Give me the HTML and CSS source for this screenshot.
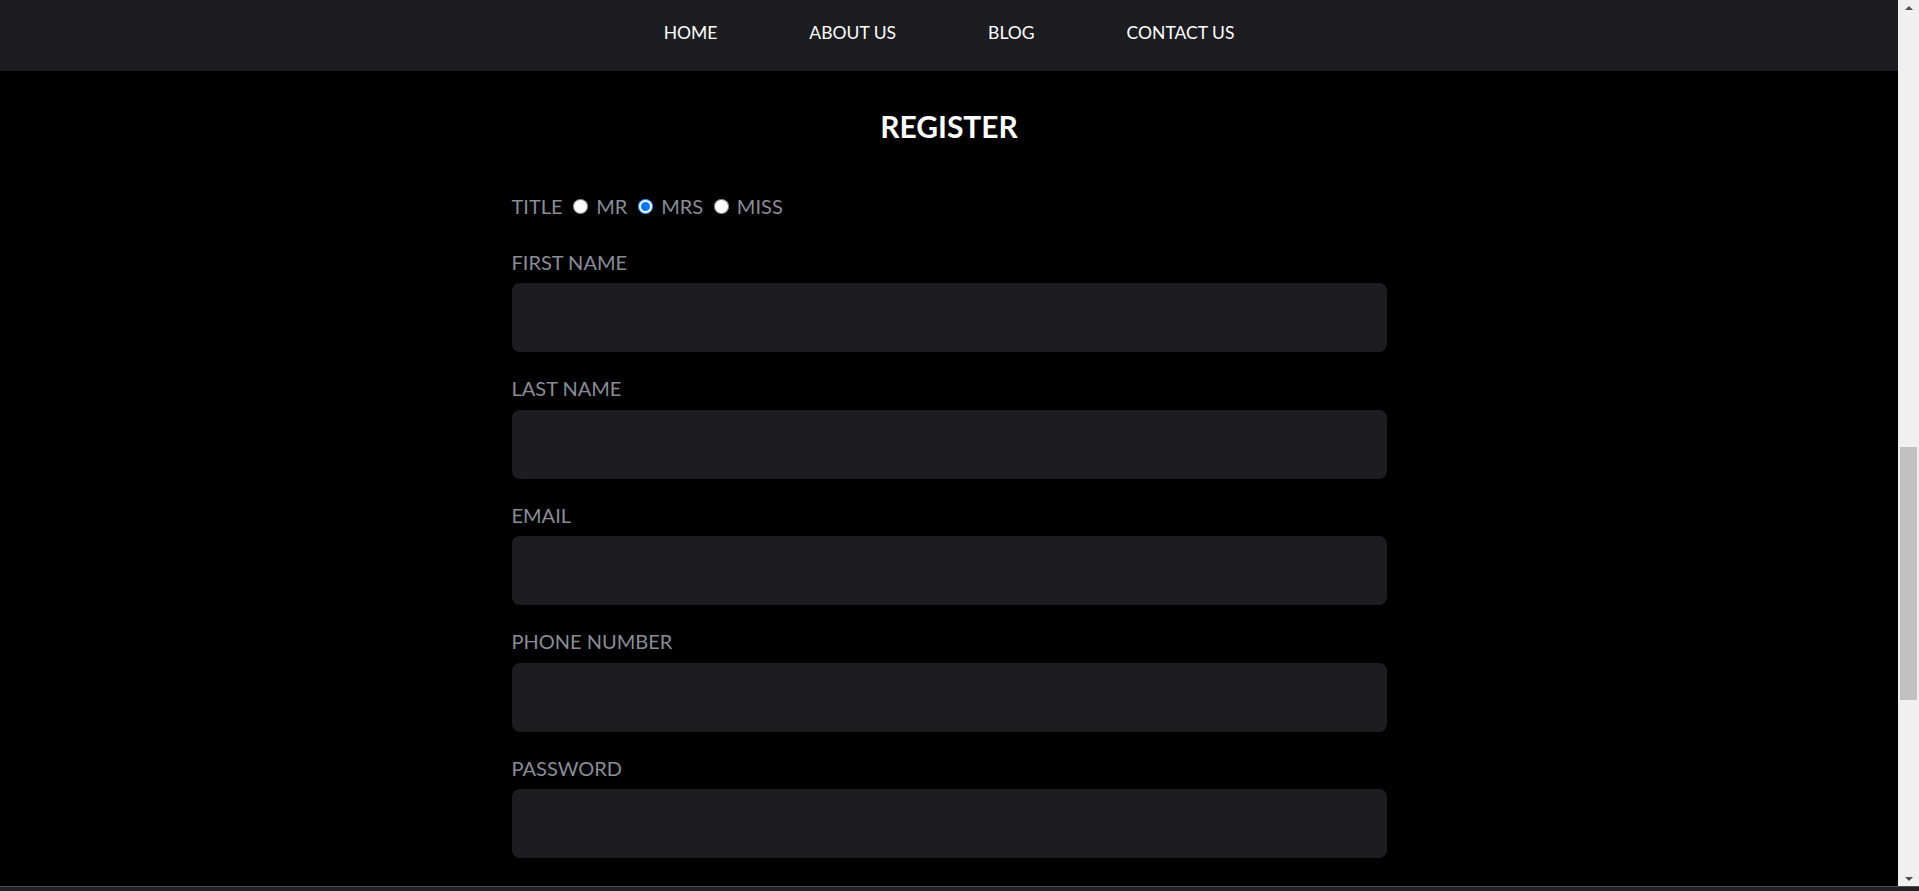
FILE: index.html
```html
<!DOCTYPE html>
<html lang="en">
<head>
<meta charset="utf-8">
<title>Register</title>
<link rel="stylesheet" href="styles.css">
</head>
<body>
<div class="screen">
  <div class="viewport">
    <header class="topnav">
      <nav>
        <ul class="nav-list">
          <li><a class="nav-link" href="#">HOME</a></li>
          <li><a class="nav-link" href="#">ABOUT US</a></li>
          <li><a class="nav-link" href="#">BLOG</a></li>
          <li><a class="nav-link" href="#">CONTACT US</a></li>
        </ul>
      </nav>
    </header>
    <main class="content">
      <h1 class="page-title">REGISTER</h1>
      <form class="register-form">
        <div class="title-row">
          <span class="label-text">TITLE</span>
          <input class="radio" type="radio" name="title" id="t-mr"> <label class="label-text" for="t-mr">MR</label>
          <input class="radio" type="radio" name="title" id="t-mrs" checked> <label class="label-text" for="t-mrs">MRS</label>
          <input class="radio" type="radio" name="title" id="t-miss"> <label class="label-text" for="t-miss">MISS</label>
        </div>
        <div class="field">
          <label class="field-label" for="f-first">FIRST NAME</label>
          <input class="field-input" type="text" id="f-first">
        </div>
        <div class="field">
          <label class="field-label" for="f-last">LAST NAME</label>
          <input class="field-input" type="text" id="f-last">
        </div>
        <div class="field">
          <label class="field-label" for="f-email">EMAIL</label>
          <input class="field-input" type="email" id="f-email">
        </div>
        <div class="field">
          <label class="field-label" for="f-phone">PHONE NUMBER</label>
          <input class="field-input" type="tel" id="f-phone">
        </div>
        <div class="field">
          <label class="field-label" for="f-pass">PASSWORD</label>
          <input class="field-input" type="password" id="f-pass">
        </div>
      </form>
    </main>
  </div>
  <div class="scrollbar">
    <div class="sb-btn"><span class="sb-arrow-up"></span></div>
    <div class="sb-track"><div class="sb-thumb"></div></div>
    <div class="sb-btn"><span class="sb-arrow-down"></span></div>
  </div>
</div>
<div class="taskbar"></div>
</body>
</html>
```

FILE: styles.css
```css
html, body {
  margin: 0;
  padding: 0;
  height: 891px;
  overflow: hidden;
  background: #000;
}

body {
  display: flex;
  flex-direction: column;
  font-family: Lato, "Open Sans", "Liberation Sans", sans-serif;
}

.screen {
  display: flex;
  height: 886px;
}

.viewport {
  flex: 1;
  min-width: 0;
  background: #000;
  overflow: hidden;
}

.topnav {
  height: 71px;
  box-sizing: border-box;
  padding-top: 22px;
  background: #1c1c21;
}

.nav-list {
  list-style: none;
  margin: 0;
  padding: 0;
  display: flex;
  justify-content: center;
  gap: 92px;
}

.nav-link {
  color: #ffffff;
  text-decoration: none;
  font-size: 17.5px;
  line-height: 22px;
  display: block;
}

.content {
  width: 875px;
  margin: 0 auto;
}

.page-title {
  margin: 37px 0 49.5px;
  text-align: center;
  color: #ffffff;
  font-size: 30px;
  font-weight: 700;
  line-height: 36px;
}

.title-row {
  font-size: 20px;
  line-height: 24px;
  margin-bottom: 32px;
}

.label-text {
  color: #8a8c96;
}

.radio {
  margin: 3px 3px 0 5.5px;
  width: 15px;
  height: 15px;
}

.field {
  margin-bottom: 24px;
}

.field-label {
  display: block;
  color: #8a8c96;
  font-size: 20px;
  line-height: 24px;
  margin-bottom: 9.5px;
}

.field-input {
  display: block;
  width: 100%;
  height: 69px;
  box-sizing: border-box;
  border: none;
  border-radius: 8px;
  background: #1c1c21;
  color: #fff;
  padding: 0 16px;
  font-family: inherit;
  font-size: 18px;
  outline: none;
}

.scrollbar {
  width: 21px;
  background: #f0f0f0;
  display: flex;
  flex-direction: column;
}

.sb-btn {
  height: 17px;
  display: flex;
  align-items: center;
  justify-content: center;
}

.sb-arrow-up {
  width: 0;
  height: 0;
  border-left: 4.5px solid transparent;
  border-right: 4.5px solid transparent;
  border-bottom: 4.5px solid #505050;
  margin-top: -2px;
}

.sb-arrow-down {
  width: 0;
  height: 0;
  border-left: 4.5px solid transparent;
  border-right: 4.5px solid transparent;
  border-top: 4.5px solid #505050;
  margin-top: 2px;
}

.sb-track {
  flex: 1;
}

.sb-thumb {
  margin: 430px 2px 0 2px;
  height: 253px;
  background: #c1c1c1;
}

.taskbar {
  height: 5px;
  box-sizing: border-box;
  border-top: 1px solid #4f4f4f;
  background: #1f2329;
}
```
